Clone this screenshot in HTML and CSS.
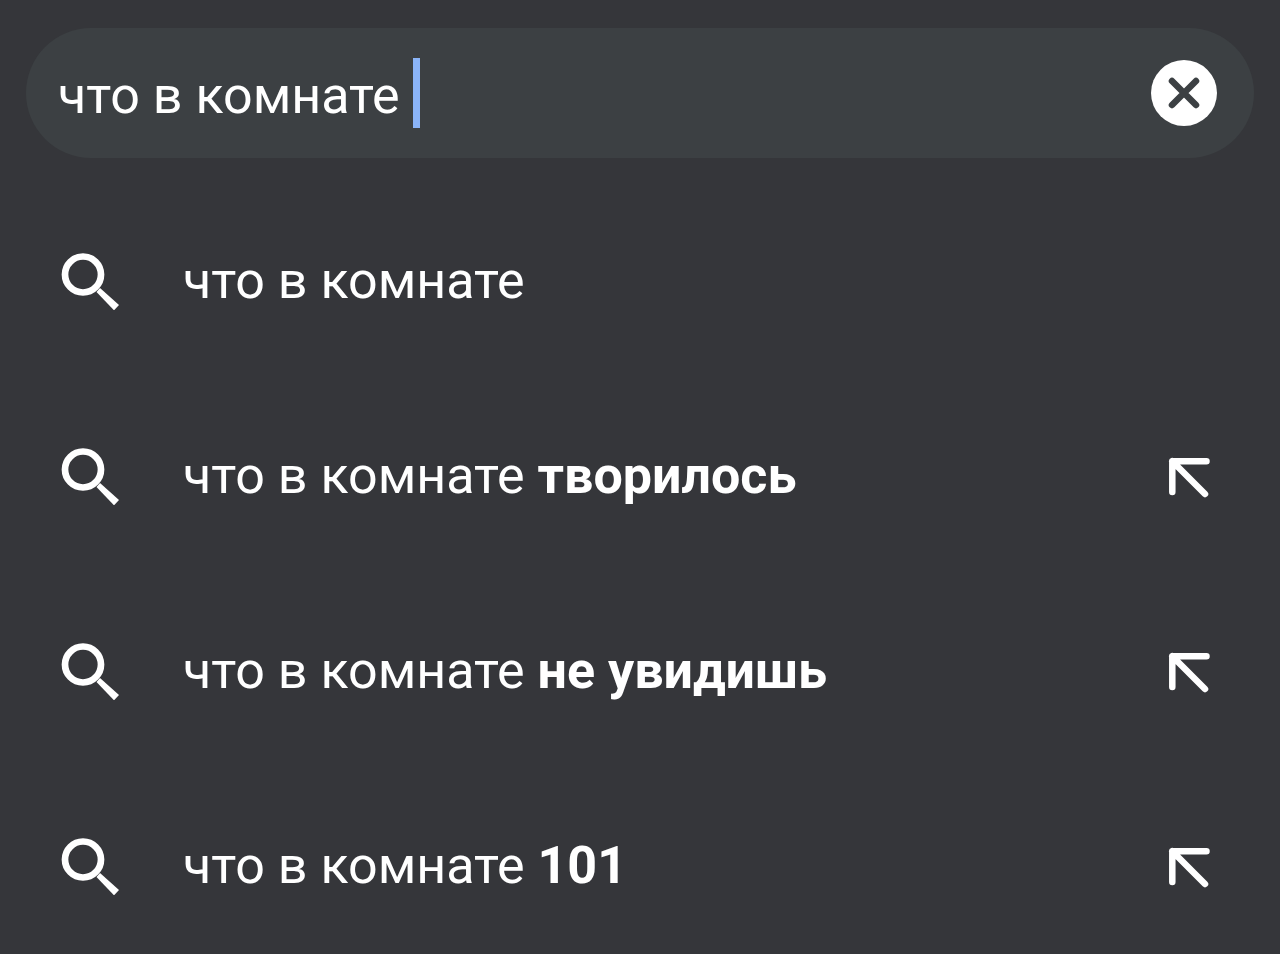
FILE: index.html
```html
<!DOCTYPE html>
<html lang="ru">
<head>
<meta charset="utf-8">
<meta name="viewport" content="width=device-width, initial-scale=1">
<title>Поиск</title>
<link rel="stylesheet" href="styles.css">
</head>
<body>
<svg class="defs" aria-hidden="true">
  <symbol id="search" viewBox="0 0 58 58">
    <circle cx="22" cy="22.5" r="18" fill="none" stroke="currentColor" stroke-width="6.7"/>
    <path d="M35.5 40L39 36L58 53L53 58.3Z" fill="currentColor"/>
  </symbol>
  <symbol id="insert" viewBox="0 0 42 44">
    <path d="M38.5 7.3H4.3V38M4.3 7.3L37 40" fill="none" stroke="currentColor" stroke-width="6.5" stroke-linecap="round" stroke-linejoin="round"/>
  </symbol>
</svg>
<main class="page">
  <form class="search-bar" role="search">
    <div class="field">
      <input class="query" type="text" aria-label="Поисковый запрос" value="что в комнате " autocomplete="off" spellcheck="false">
      <span class="caret" aria-hidden="true"></span>
    </div>
    <button class="clear" type="reset" aria-label="Очистить">
      <svg viewBox="0 0 66 66"><circle cx="33" cy="33" r="33" fill="#fff"/><path d="M21 21L45 45M45 21L21 45" stroke="#3c4043" stroke-width="6.5" stroke-linecap="round"/></svg>
    </button>
  </form>
  <ul class="suggestions">
    <li class="row"><button class="suggestion" type="button"><svg class="search-icon" aria-hidden="true"><use href="#search"/></svg><span>что в комнате</span></button></li>
    <li class="row"><button class="suggestion" type="button"><svg class="search-icon" aria-hidden="true"><use href="#search"/></svg><span>что в комнате <b>творилось</b></span></button><button class="insert" type="button" aria-label="Вставить запрос"><svg class="insert-icon"><use href="#insert"/></svg></button></li>
    <li class="row"><button class="suggestion" type="button"><svg class="search-icon" aria-hidden="true"><use href="#search"/></svg><span>что в комнате <b>не увидишь</b></span></button><button class="insert" type="button" aria-label="Вставить запрос"><svg class="insert-icon"><use href="#insert"/></svg></button></li>
    <li class="row"><button class="suggestion" type="button"><svg class="search-icon" aria-hidden="true"><use href="#search"/></svg><span>что в комнате <b>101</b></span></button><button class="insert" type="button" aria-label="Вставить запрос"><svg class="insert-icon"><use href="#insert"/></svg></button></li>
  </ul>
</main>
</body>
</html>
```
FILE: styles.css
```css
* { box-sizing: border-box; }
body { margin: 0; background: #35363a; color: #fff; font-family: Roboto, sans-serif; font-size: 52px; line-height: 64px; }
.defs { display: none; }
.page { padding: 28px 26px 0; }
button { border: 0; padding: 0; background: none; color: inherit; font: inherit; text-align: left; cursor: pointer; }
svg { display: block; }
.search-bar { display: flex; align-items: center; justify-content: space-between; padding: 0 37px 0 32px; height: 130px; border-radius: 65px; background: #3c4043; }
.field { display: flex; align-items: center; min-width: 0; }
.query { field-sizing: content; min-width: 0; padding: 6px 0 0; border: 0; outline: 0; background: none; color: inherit; font: inherit; }
.caret { width: 7px; height: 70px; background: #8ab4f8; }
.clear, .clear svg { width: 66px; height: 66px; }
.suggestions { margin: 25px 0 0; padding: 0; list-style: none; }
.row { display: flex; align-items: center; height: 195px; padding: 0 44px 0 35px; }
.suggestion { display: flex; align-items: center; gap: 64px; flex: 1; }
.search-icon { width: 58px; height: 58px; overflow: visible; }
.insert-icon { width: 42px; height: 44px; }
b { font-weight: 700; }
```
